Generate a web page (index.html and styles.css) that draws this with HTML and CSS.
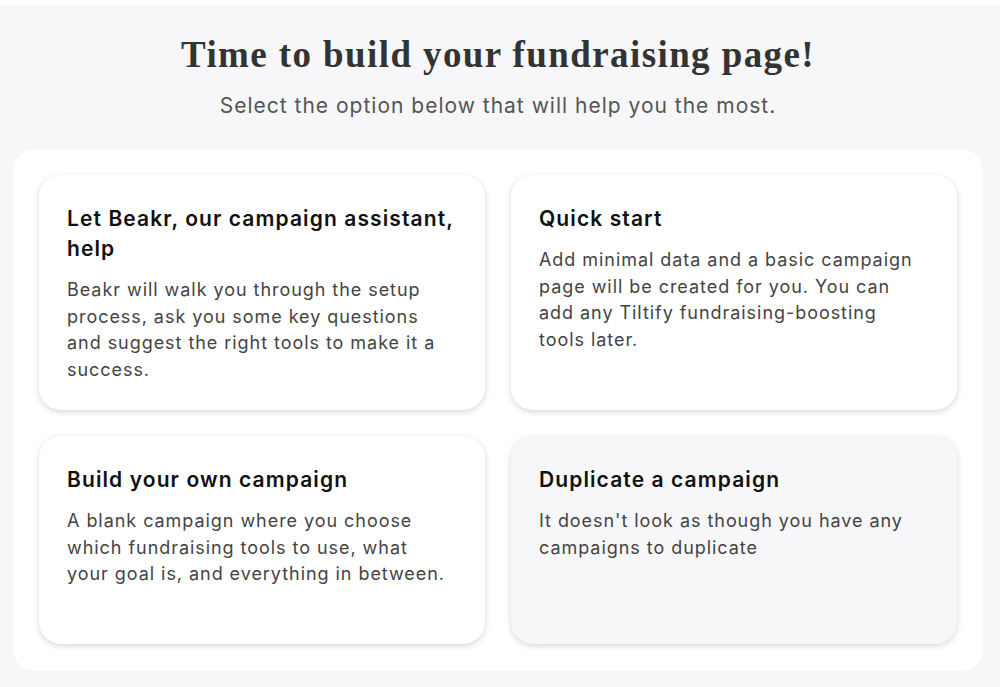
FILE: index.html
```html
<!DOCTYPE html>
<html lang="en">
<head>
    <meta charset="UTF-8">
    <meta name="viewport" content="width=device-width, initial-scale=1.0">
    <title>Time to build your fundraising page!</title>
    <link rel="stylesheet" href="styles.css">
</head>
<body>

    <div class="page">
        <div class="intro">
            <h1>Time to build your fundraising page!</h1>
            <p>Select the option below that will help you the most.</p>
        </div>

        <!-- Options -->
        <div class="options">
            <div class="option">
                <h2>Let Beakr, our campaign assistant, help</h2>
                <p>Beakr will walk you through the setup process, ask you some key questions and suggest the right tools to make it a success.</p>
            </div>
            <div class="option">
                <h2>Quick start</h2>
                <p>Add minimal data and a basic campaign page will be created for you. You can add any Tiltify fundraising-boosting tools later.</p>
            </div>
            <div class="option">
                <h2>Build your own campaign</h2>
                <p>A blank campaign where you choose which fundraising tools to use, what your goal is, and everything in between.</p>
            </div>
            <div class="option disabled">
                <h2>Duplicate a campaign</h2>
                <p>It doesn't look as though you have any campaigns to duplicate</p>
            </div>
        </div>
    </div>

</body>
</html>
```

FILE: styles.css
```css
* {
    margin: 0;
    padding: 0;
    box-sizing: border-box;
}

body {
    background-color: #ffffff;
    font-family: Inter, "Noto Sans", sans-serif;
}

.page {
    margin-top: 5px;
    background-color: #f7f7f9;
    padding: 0 17px 17px 13px;
    min-height: 682px;
}

.intro {
    text-align: center;
    padding: 28px 0 29px;
}

.intro h1 {
    font-family: "Liberation Serif", "DejaVu Serif", serif;
    font-weight: bold;
    font-size: 37px;
    letter-spacing: 1.4px;
    line-height: 44px;
    color: #333333;
}

.intro p {
    margin-top: 15px;
    font-size: 21px;
    letter-spacing: 1px;
    line-height: 28px;
    color: #555555;
}

.options {
    background-color: #ffffff;
    border-radius: 22px;
    padding: 26px 26px 27px;
    display: grid;
    grid-template-columns: 1fr 1fr;
    gap: 26px;
}

.option {
    background-color: #ffffff;
    border-radius: 22px;
    box-shadow: 0 2px 6px rgba(0, 0, 0, 0.16);
    padding: 29px 31px 27px 28px;
    min-height: 208px;
    cursor: pointer;
}

.option.disabled {
    background-color: #f7f7f9;
    cursor: not-allowed;
}

.option h2 {
    font-size: 21px;
    font-weight: 600;
    letter-spacing: 1.1px;
    line-height: 30px;
    color: #111111;
}

.option p {
    margin-top: 13px;
    font-size: 18px;
    letter-spacing: 0.95px;
    line-height: 26.5px;
    color: #444444;
}
```
